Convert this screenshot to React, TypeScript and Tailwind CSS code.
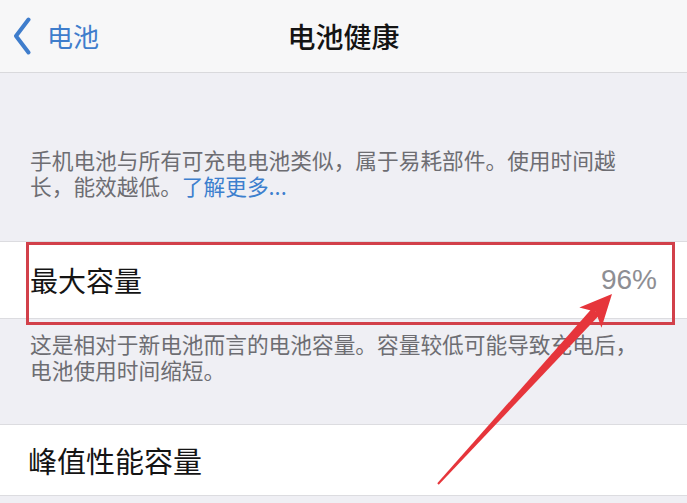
const CJK = "font-['Noto_Sans_CJK_SC','Noto_Sans',sans-serif]"

function Arrow() {
  // red annotation arrow pointing at the capacity value
  const tail = [438, 484]
  const tip = [612, 294]
  const dx = tip[0] - tail[0]
  const dy = tip[1] - tail[1]
  const len = Math.hypot(dx, dy)
  const ux = dx / len
  const uy = dy / len
  const nx = -uy
  const ny = ux
  const at = (d: number, w: number) => [tip[0] - ux * d + nx * w, tip[1] - uy * d + ny * w]
  const head = [tip, at(32, 15), at(24, 0), at(32, -15)]
  const shaft = [at(len, 1), at(24, 5), at(24, -5), at(len, -1)]
  const pts = (p: number[][]) => p.map((q) => q.join(',')).join(' ')
  return (
    <svg className="pointer-events-none absolute inset-0" width="687" height="503" viewBox="0 0 687 503">
      <polygon points={pts(shaft)} fill="#e6353b" />
      <polygon points={pts(head)} fill="#e6353b" />
    </svg>
  )
}

export default function App() {
  return (
    <div className={`relative h-[503px] w-[687px] overflow-hidden bg-[#efeff4] ${CJK}`}>
      {/* nav bar */}
      <div className="grid h-[73px] grid-cols-[1fr_auto_1fr] items-center border-b border-[#d9d9dc] bg-[#f7f7f8]">
        <div className="flex items-center pl-[13px] text-[#3f7dcc]">
          <svg width="18" height="38" viewBox="0 0 18 38" className="shrink-0">
            <path d="M15.5 2.5 L3 19 L15.5 35.5" fill="none" stroke="#3f7dcc" strokeWidth="4" strokeLinecap="round" strokeLinejoin="round" />
          </svg>
          <span className="ml-[16px] text-[26px] leading-none">电池</span>
        </div>
        <div className="text-[28px] font-medium leading-none text-[#141414]">电池健康</div>
        <div />
      </div>

      {/* intro */}
      <div className="whitespace-nowrap px-[30px] pb-[42px] pt-[74px] text-[21.7px] leading-[26px] text-[#6d6d72]">
        <div>手机电池与所有可充电电池类似，属于易耗部件。使用时间越</div>
        <div>
          长，能效越低。<span className="text-[#3d7fce]">了解更多...</span>
        </div>
      </div>

      {/* max capacity */}
      <div className="flex h-[78px] items-center justify-between border-y border-[#dcdce0] bg-white pl-[30px] pr-[30px]">
        <span className="text-[28px] leading-none text-[#141414]">最大容量</span>
        <span className="font-['Liberation_Sans','Noto_Sans_CJK_SC',sans-serif] text-[28px] leading-none text-[#8e8e93]">
          96%
        </span>
      </div>

      <div className="whitespace-nowrap px-[30px] pb-[41px] pt-[12px] text-[21.7px] leading-[26px] text-[#6d6d72]">
        <div>这是相对于新电池而言的电池容量。容量较低可能导致充电后，</div>
        <div>电池使用时间缩短。</div>
      </div>

      {/* peak performance */}
      <div className="flex h-[72px] items-center border-y border-[#dcdce0] bg-white pl-[28px]">
        <span className="text-[29px] leading-none text-[#141414]">峰值性能容量</span>
      </div>

      {/* annotation overlay */}
      <div className="pointer-events-none absolute left-[26px] top-[242px] h-[83px] w-[649px] border-[3px] border-[#d2404a]" />
      <Arrow />
    </div>
  )
}
